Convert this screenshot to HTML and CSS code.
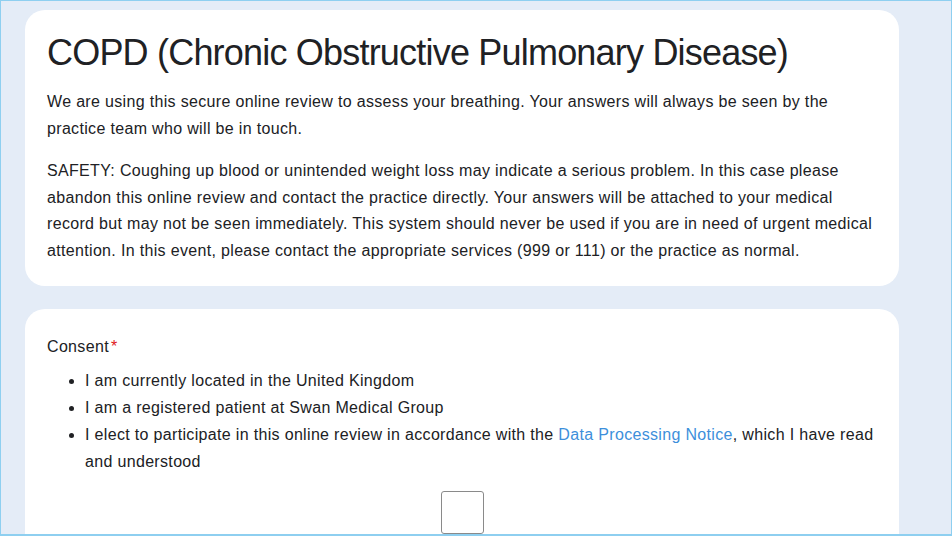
FILE: index.html
```html
<!DOCTYPE html>
<html lang="en">
<head>
<meta charset="utf-8">
<title>COPD review</title>
<link rel="stylesheet" href="styles.css">
</head>
<body>
<div class="frame">
  <main class="page">
    <section class="card intro">
      <h1 class="title">COPD (Chronic Obstructive Pulmonary Disease)</h1>
      <p class="para first">We are using this secure online review to assess your breathing. Your answers will always be seen by the practice team who will be in touch.</p>
      <p class="para">SAFETY: Coughing up blood or unintended weight loss may indicate a serious problem. In this case please abandon this online review and contact the practice directly. Your answers will be attached to your medical record but may not be seen immediately. This system should never be used if you are in need of urgent medical attention. In this event, please contact the appropriate services (999 or 111) or the practice as normal.</p>
    </section>
    <section class="card consent">
      <div class="label">Consent<span class="req">*</span></div>
      <ul class="items">
        <li>I am currently located in the United Kingdom</li>
        <li>I am a registered patient at Swan Medical Group</li>
        <li>I elect to participate in this online review in accordance with the <a class="link" href="#">Data Processing Notice</a>, which I have read and understood</li>
      </ul>
      <div class="check-row"><span class="checkbox"></span></div>
    </section>
  </main>
</div>
</body>
</html>
```

FILE: styles.css
```css
html, body {
  margin: 0;
  padding: 0;
}
body {
  font-family: "Liberation Sans", Arial, sans-serif;
  color: #202124;
  background: #e4ecf7;
}
.frame {
  box-sizing: border-box;
  width: 952px;
  height: 536px;
  border: 1px solid #8ecff0;
  border-bottom: 2px solid #8ecff0;
  background: #e4ecf7;
  overflow: hidden;
}
.page {
  display: flex;
  flex-direction: column;
  gap: 23px;
  padding: 9px 0 0 24px;
  width: 874px;
}
.card {
  background: #fff;
  border-radius: 20px;
  padding: 0 22px;
}
.intro {
  padding-top: 21px;
  padding-bottom: 21px;
}
.title {
  margin: 0;
  font-size: 36px;
  font-weight: 400;
  line-height: 43px;
  letter-spacing: -0.8px;
}
.para {
  margin: 16px 0 0;
  font-size: 16px;
  line-height: 26.7px;
  letter-spacing: 0.33px;
}
.para.first {
  margin-top: 14px;
  line-height: 27px;
}
.consent {
  padding-top: 24px;
  padding-bottom: 40px;
}
.label {
  font-size: 16px;
  line-height: 27px;
  letter-spacing: 0.33px;
}
.req {
  color: #e0201c;
  margin-left: 2px;
}
.items {
  margin: 7px 0 0;
  padding-left: 38px;
  font-size: 16px;
  line-height: 27px;
  letter-spacing: 0.33px;
}
.link {
  color: #3d8fdb;
  text-decoration: none;
}
.check-row {
  display: flex;
  justify-content: center;
  margin-top: 16px;
}
.checkbox {
  display: block;
  box-sizing: border-box;
  width: 43px;
  height: 43px;
  border: 1px solid #8a8a8a;
  border-radius: 3px;
  background: #fff;
}
```
